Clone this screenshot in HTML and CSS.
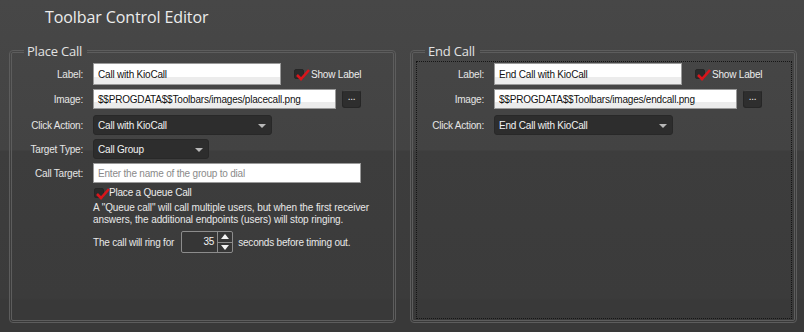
FILE: index.html
```html
<!DOCTYPE html>
<html lang="en">
<head>
    <meta charset="UTF-8">
    <title>Toolbar Control Editor</title>
    <link rel="stylesheet" href="styles.css">
</head>
<body>
    <div class="title">Toolbar Control Editor</div>

    <div class="panels">
        <fieldset class="group">
            <legend>Place Call</legend>
            <div class="group-body">
                <div class="row row-label">
                    <span class="field-label">Label:</span>
                    <div class="text-box w-label">Call with KioCall</div>
                    <span class="check show-label">
                        <span class="check-box">
                            <svg width="14" height="12" viewBox="0 0 14 12"><path d="M1 6 L5 10 L13 1" fill="none" stroke="#d8151b" stroke-width="2.6"/></svg>
                        </span>
                        Show Label
                    </span>
                </div>
                <div class="row">
                    <span class="field-label">Image:</span>
                    <div class="text-box w-image">$$PROGDATA$$Toolbars/images/placecall.png</div>
                    <span class="browse-btn">...</span>
                </div>
                <div class="row row-gap6">
                    <span class="field-label">Click Action:</span>
                    <div class="combo w-action">Call with KioCall<span class="combo-arrow"></span></div>
                </div>
                <div class="row">
                    <span class="field-label">Target Type:</span>
                    <div class="combo w-type">Call Group<span class="combo-arrow"></span></div>
                </div>
                <div class="row">
                    <span class="field-label">Call Target:</span>
                    <div class="text-box w-target placeholder">Enter the name of the group to dial</div>
                </div>
                <div class="indent">
                    <span class="check queue-check">
                        <span class="check-box">
                            <svg width="14" height="12" viewBox="0 0 14 12"><path d="M1 6 L5 10 L13 1" fill="none" stroke="#d8151b" stroke-width="2.6"/></svg>
                        </span>
                        Place a Queue Call
                    </span>
                    <p class="hint">A "Queue call" will call multiple users, but when the first receiver<br>answers, the additional endpoints (users) will stop ringing.</p>
                    <div class="ring-row">
                        The call will ring for
                        <div class="spinner">
                            <span class="spinner-value">35</span>
                            <span class="spinner-btns">
                                <span class="spin-up"></span>
                                <span class="spin-down"></span>
                            </span>
                        </div>
                        seconds before timing out.
                    </div>
                </div>
            </div>
        </fieldset>

        <fieldset class="group">
            <legend>End Call</legend>
            <div class="group-body focused">
                <div class="row row-label">
                    <span class="field-label">Label:</span>
                    <div class="text-box w-label">End Call with KioCall</div>
                    <span class="check show-label">
                        <span class="check-box">
                            <svg width="14" height="12" viewBox="0 0 14 12"><path d="M1 6 L5 10 L13 1" fill="none" stroke="#d8151b" stroke-width="2.6"/></svg>
                        </span>
                        Show Label
                    </span>
                </div>
                <div class="row">
                    <span class="field-label">Image:</span>
                    <div class="text-box w-image">$$PROGDATA$$Toolbars/images/endcall.png</div>
                    <span class="browse-btn">...</span>
                </div>
                <div class="row row-gap6">
                    <span class="field-label">Click Action:</span>
                    <div class="combo w-action">End Call with KioCall<span class="combo-arrow"></span></div>
                </div>
            </div>
        </fieldset>
    </div>
</body>
</html>
```

FILE: styles.css
```css
* {
    margin: 0;
    padding: 0;
    box-sizing: border-box;
}

body {
    width: 804px;
    height: 332px;
    overflow: hidden;
    font-family: "Liberation Sans", Arial, sans-serif;
    font-size: 10px;
    letter-spacing: -0.2px;
    color: #e4e4e4;
    background: linear-gradient(#474747 0px, #434343 150px, #3d3d3d 151px, #3b3b3b 298px, #393939 300px);
}

.title {
    height: 42px;
    padding: 6px 0 0 45px;
    font-family: "Open Sans", "DejaVu Sans", sans-serif;
    font-size: 16px;
    letter-spacing: -0.1px;
    color: #ececec;
}

.panels {
    display: flex;
    gap: 14px;
    padding: 0 7px 0 9px;
    height: 281px;
}

.group {
    flex: 1;
    border: 3px double #5d5d5d;
    border-radius: 4px;
    min-width: 0;
    display: flex;
}

.group legend {
    margin-left: 12px;
    padding: 0 5px 0 3px;
    font-family: "Open Sans", "DejaVu Sans", sans-serif;
    font-size: 13px;
    letter-spacing: -0.2px;
    line-height: 18px;
    color: #e2e2e2;
}

.group-body {
    flex: 1;
    margin: 1px 2px 1px 3px;
    padding-top: 1px;
    border: 1px solid transparent;
}

.group-body.focused {
    border: 1px dotted #151515;
}

.row {
    display: flex;
    align-items: center;
    height: 20px;
    margin-top: 4px;
}

.row-label {
    height: 22px;
    margin-top: 0;
}

.row-gap6 {
    margin-top: 6px;
}

.field-label {
    width: 67px;
    margin-right: 10px;
    text-align: right;
    color: #e6e6e6;
}

.text-box {
    height: 100%;
    padding: 0 4px;
    display: flex;
    align-items: center;
    color: #111;
    background: linear-gradient(#ffffff 65%, #ececec 65%);
    border: 1px solid #9a9a9a;
    white-space: nowrap;
}

.text-box.placeholder {
    color: #8a8a8a;
    background: #fff;
}

.w-label { width: 188px; }
.w-image { width: 243px; }
.w-target { width: 268px; }
.w-action { width: 179px; }
.w-type { width: 116px; }

.browse-btn {
    width: 19px;
    height: 18px;
    margin-left: 6px;
    border-radius: 3px;
    background: #2e2e2e;
    border: 1px solid #262626;
    border-top-color: #4a4a4a;
    color: #f0f0f0;
    font-size: 10px;
    text-align: center;
    line-height: 12px;
}

.combo {
    position: relative;
    height: 100%;
    padding: 0 4px;
    display: flex;
    align-items: center;
    background: #2d2d2d;
    border: 1px solid #282828;
    border-radius: 3px;
    color: #f2f2f2;
}

.combo-arrow {
    position: absolute;
    right: 5px;
    top: 8px;
    border-left: 4px solid transparent;
    border-right: 4px solid transparent;
    border-top: 4px solid #b8b8b8;
}

.check {
    display: flex;
    align-items: center;
    color: #ececec;
}

.show-label {
    margin-left: 13px;
}

.check-box {
    position: relative;
    width: 10px;
    height: 10px;
    margin-right: 7px;
    background: #2a2a2a;
    border: 1px solid #262626;
    border-radius: 2px;
}

.check-box svg {
    position: absolute;
    left: 1px;
    top: -1px;
}

.indent {
    padding-left: 77px;
}

.queue-check {
    height: 13px;
    margin-top: 3px;
}

.queue-check .check-box {
    margin-left: 1px;
    margin-right: 5px;
}

.hint {
    margin-top: 3px;
    font-size: 10px;
    letter-spacing: -0.1px;
    line-height: 12px;
    white-space: nowrap;
    color: #e8e8e8;
}

.ring-row {
    display: flex;
    align-items: center;
    height: 22px;
    margin-top: 5px;
    color: #e8e8e8;
}

.spinner {
    display: flex;
    width: 52px;
    height: 22px;
    margin: 0 5px 0 7px;
    border: 1px solid #8c8c8c;
    border-radius: 2px;
    background: #363636;
}

.spinner-value {
    flex: 1;
    padding-right: 3px;
    text-align: right;
    line-height: 20px;
    color: #f2f2f2;
}

.spinner-btns {
    width: 15px;
    display: flex;
    flex-direction: column;
    border-left: 1px solid #8c8c8c;
}

.spinner-btns span {
    flex: 1;
    display: flex;
    justify-content: center;
    align-items: center;
}

.spin-up {
    border-bottom: 1px solid #8c8c8c;
}

.spin-up::before {
    content: "";
    border-left: 4px solid transparent;
    border-right: 4px solid transparent;
    border-bottom: 5px solid #f4f4f4;
}

.spin-down::before {
    content: "";
    border-left: 4px solid transparent;
    border-right: 4px solid transparent;
    border-top: 5px solid #f4f4f4;
}
```
